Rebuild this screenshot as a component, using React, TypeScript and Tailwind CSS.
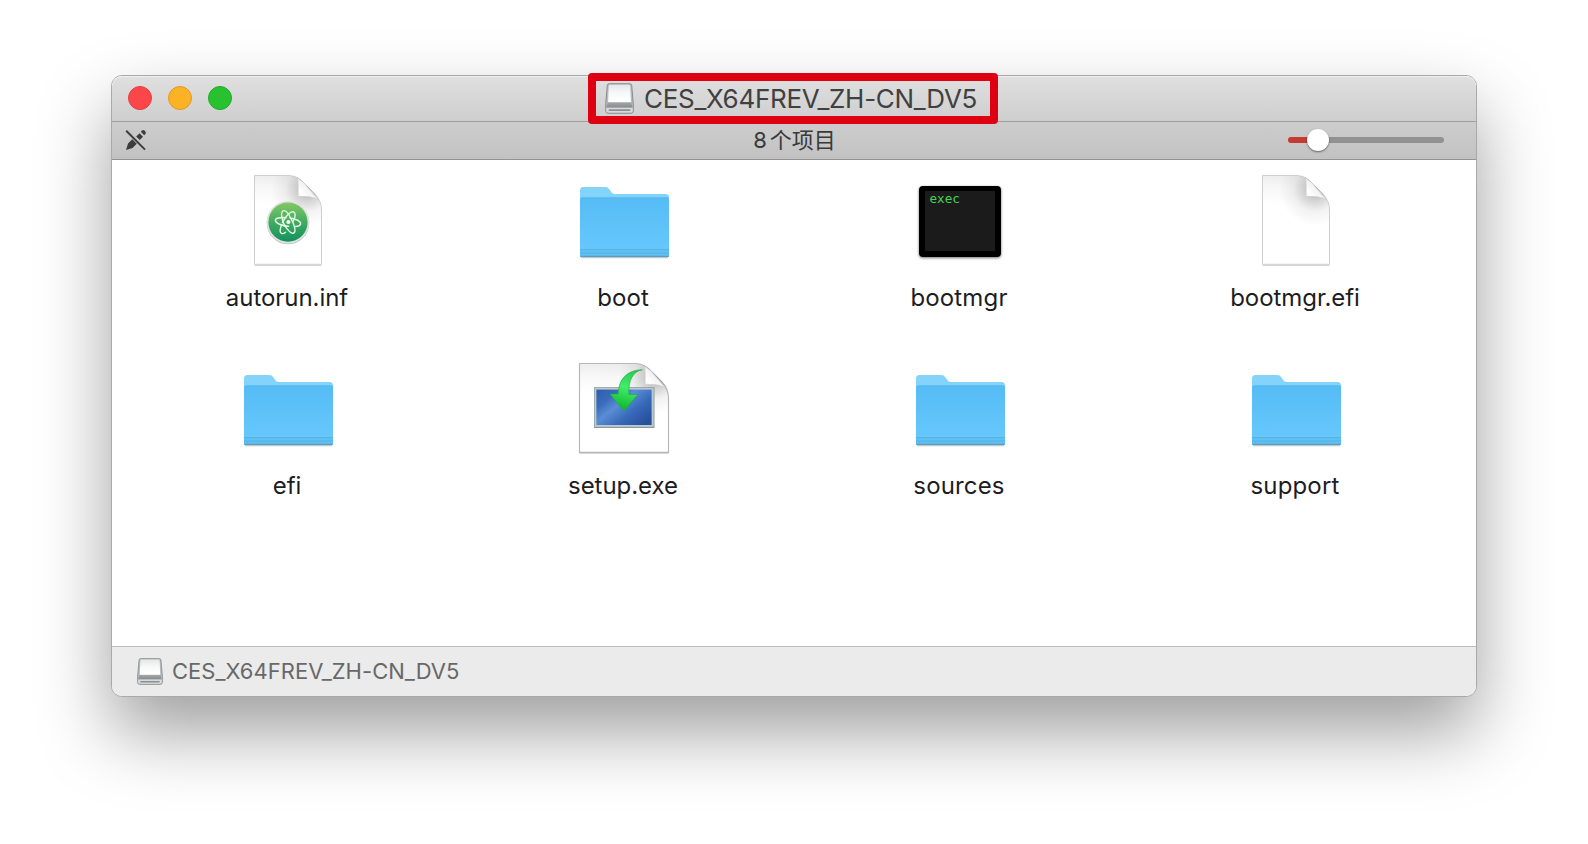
import React from "react";

function Drive({ className, dark }: { className: string; dark?: boolean }) {
  const id = dark ? "drive-a" : "drive-b";
  return (
    <svg viewBox="0 0 28 30" preserveAspectRatio="none" className={className}>
      <defs>
        <linearGradient id={id} x1="0" y1="0" x2="0" y2="1">
          <stop offset="0" stopColor="#e4e7e9" />
          <stop offset=".5" stopColor="#f8f9f9" />
          <stop offset="1" stopColor="#ffffff" />
        </linearGradient>
        <linearGradient id={`${id}-slope`} x1="0" y1="0" x2="0" y2="1">
          <stop offset="0" stopColor="#a4a7a9" />
          <stop offset="1" stopColor="#858a8d" />
        </linearGradient>
      </defs>
      <path d="M3.9.7H24.1Q25.7.7 25.8 2.5L27.3 20V27Q27.3 29.3 25 29.3H3Q.7 29.3.7 27V20L2.2 2.5Q2.3.7 3.9.7Z" fill="#b9bcbe" stroke="#84888b" strokeWidth=".9" />
      <path d="M4.6 1.7H23.4Q24.3 1.7 24.4 2.8L25 18.6H3L3.6 2.8Q3.7 1.7 4.6 1.7Z" fill={`url(#${id})`} />
      <path d="M2.6 18.8H25.4L26.6 23.9H1.4Z" fill={`url(#${id}-slope)`} />
      <path d="M1.3 24H26.7V26.8Q26.7 28.6 24.8 28.6H3.2Q1.3 28.6 1.3 26.8Z" fill="#d9dbdc" />
      <rect x="3.4" y="25.5" width="21.2" height="1.6" rx=".8" fill="#8a8f92" />
    </svg>
  );
}

function Page({ wide, id, children }: { wide?: boolean; id: string; children?: React.ReactNode }) {
  const w = wide ? 90 : 68;
  return (
    <svg viewBox={`-2 -1 ${w + 4} 94`} width={w + 4} height={94} className="block">
      <defs>
        <linearGradient id={`${id}-bg`} x1="0.3" y1="0" x2="0.24" y2="1">
          <stop offset="0" stopColor="#ececec" />
          <stop offset=".14" stopColor="#f7f7f7" />
          <stop offset=".34" stopColor="#ffffff" />
        </linearGradient>
        <radialGradient id={`${id}-sh`} gradientUnits="userSpaceOnUse" cx={w - 15} cy="15" r="36">
          <stop offset="0" stopColor="#000" stopOpacity=".28" />
          <stop offset=".3" stopColor="#000" stopOpacity=".16" />
          <stop offset=".6" stopColor="#000" stopOpacity=".05" />
          <stop offset="1" stopColor="#000" stopOpacity="0" />
        </radialGradient>
        <linearGradient id={`${id}-fold`} x1="0" y1="1" x2=".55" y2=".45">
          <stop offset="0" stopColor="#e6e6e6" />
          <stop offset=".4" stopColor="#ffffff" />
          <stop offset="1" stopColor="#f0f0f0" />
        </linearGradient>
      </defs>
      <g transform={`translate(${w - 67} 0)`}>
        <path d={`M${67 - w + 0.5} 90.3H66.5`} stroke="#000" strokeOpacity=".16" strokeWidth="1.6" />
        <path d={`M${67 - w + 0.5} .5H34Q42 1 47 6L60 19Q66.5 26 66.5 35V89.3H${67 - w + 0.5}Z`} fill={`url(#${id}-bg)`} stroke={wide ? "#b8b8b8" : "#cbcbcb"} strokeWidth={wide ? 1.2 : 0.9} />
      </g>
      <path d={`M${w - 33} 1Q${w - 25} 1 ${w - 20} 6L${w - 7} 19Q${w - 1} 26 ${w - 1} 35V52H${w - 60}V1Z`} fill={`url(#${id}-sh)`} />
      <path d={`M${w - 24} 3.5Q${w - 23.5} 14 ${w - 24} 21.6Q${w - 12} 20.5 ${w - 4} 24.5L${w - 18} 8Z`} fill={`url(#${id}-fold)`} stroke="#cdcdcd" strokeWidth=".6" />
      {children}
    </svg>
  );
}

function AtomDoc() {
  return (
    <Page id="atom">
      <defs>
        <linearGradient id="atom-green" x1="0" y1="0" x2="0" y2="1">
          <stop offset="0" stopColor="#84c864" />
          <stop offset=".5" stopColor="#41ab62" />
          <stop offset="1" stopColor="#11915d" />
        </linearGradient>
      </defs>
      <g transform="translate(0.6 0)">
        <circle cx="33.4" cy="48" r="21.3" fill="#b9c0bc" />
        <circle cx="33.4" cy="47.2" r="21.3" fill="#dfe3e0" />
        <circle cx="33.4" cy="47.2" r="19.6" fill="url(#atom-green)" />
        <g fill="none" stroke="#e4f8e2" strokeWidth="1.4" strokeLinecap="round">
          <path d="M31.5 42.7C25 42 20.5 43.2 20.8 45.6C21.2 48.2 27 50.8 34 51.3" />
          <path d="M35.5 43C42 44 46.3 46.6 46 48.9C45.8 50.6 43.8 51.4 40.8 51.5" />
          <path d="M30.5 51.5C26.8 44.5 25.9 37.2 28.4 35.9C30.2 35 32.6 37 34.8 40.4" />
          <path d="M35.2 41.6C40 49 41.7 56.6 39.2 58C37 59.1 33 55.6 30.1 50.1" />
          <path d="M27.8 47.6C31 40.5 36.4 35.7 39 36.9C41 37.9 40.7 41.9 38.6 46.4" />
          <path d="M26.9 50C25.2 54.3 25.2 57.5 26.9 58.4C28 58.9 29.4 58.4 30.9 57.2" />
        </g>
        <circle cx="33.8" cy="47" r="2.1" fill="#f4fff2" />
      </g>
    </Page>
  );
}

function SetupDoc() {
  return (
    <Page id="setup" wide>
      <defs>
        <linearGradient id="screen" x1="0" y1="0" x2="1" y2=".8">
          <stop offset="0" stopColor="#2e5cac" />
          <stop offset=".25" stopColor="#3a6bbb" />
          <stop offset=".45" stopColor="#5a8dd4" />
          <stop offset=".7" stopColor="#386abb" />
          <stop offset="1" stopColor="#284f9c" />
        </linearGradient>
        <linearGradient id="arrow" x1=".7" y1="0" x2=".5" y2="1">
          <stop offset="0" stopColor="#2ac951" />
          <stop offset=".45" stopColor="#43ec69" />
          <stop offset="1" stopColor="#0cb52d" />
        </linearGradient>
      </defs>
      <rect x="15" y="24.2" width="60.5" height="40.8" fill="#8e989b" />
      <rect x="15.6" y="25" width="59" height="38.8" fill="#b9cbcf" />
      <rect x="17.4" y="26.6" width="55.2" height="35.4" fill="url(#screen)" />
      <path d="M63.5 6.7C54 8.5 49.3 17 49.8 31.5H58.7L45 48L31 31H39.2C39.5 16 48 7 63.5 6.7Z" fill="url(#arrow)" stroke="#20a942" strokeWidth=".6" />
    </Page>
  );
}

function Folder() {
  return (
    <svg viewBox="0 0 93 75" width={93} height={75} className="block translate-y-[2px]">
      <defs>
        <linearGradient id="folder-front" x1="0" y1="0" x2="0" y2="1">
          <stop offset="0" stopColor="#56bcf5" />
          <stop offset="1" stopColor="#68c9fd" />
        </linearGradient>
      </defs>
      <path d="M3 71.6H90" stroke="#000" strokeOpacity=".22" strokeWidth="1.5" />
      <path d="M2 12V4.5Q2 1 5.5 1H27Q30 1 31.5 3.4L34 7Q35 8 37 8H87.5Q91 8 91 11.5V14H2Z" fill="#83d3fb" />
      <path d="M2 13Q2 11.5 4 11.5H89Q91 11.5 91 13V69.5Q91 71 89.5 71H3.5Q2 71 2 69.5Z" fill="url(#folder-front)" />
      <path d="M3 12H90" stroke="#54b8ec" strokeWidth="1" />
      <rect x="2" y="63" width="89" height="8" rx="1" fill="#61c0f2" />
      <path d="M2 63.7H91M2 67.2H91" stroke="#53b2e4" strokeWidth="1" />
      <path d="M2.5 70.4H90.5" stroke="#4f9fc8" strokeWidth="1.1" />
    </svg>
  );
}

function Exec() {
  return (
    <div className="mt-[1px] mr-[1px] h-[71px] w-[82px] rounded-[4px] border-[6px] border-t-[5px] border-black bg-[#1b1b1b] shadow-[0_1px_3px_rgba(0,0,0,0.55)]">
      <div className="pl-[5px] font-['DejaVu_Sans_Mono',monospace] text-[12.6px] leading-[16px] text-[#42d551]">exec</div>
    </div>
  );
}

const items: { name: string; icon: React.ReactNode; label: string }[] = [
  { name: "autorun.inf", icon: <AtomDoc />, label: "tracking-[-0.05px]" },
  { name: "boot", icon: <Folder />, label: "tracking-[0.1px]" },
  { name: "bootmgr", icon: <Exec />, label: "tracking-[0.15px]" },
  { name: "bootmgr.efi", icon: <Page id="plain" />, label: "tracking-[-0.05px]" },
  { name: "efi", icon: <Folder />, label: "tracking-[-0.1px]" },
  { name: "setup.exe", icon: <SetupDoc />, label: "tracking-[-0.05px]" },
  { name: "sources", icon: <Folder />, label: "tracking-[0.15px]" },
  { name: "support", icon: <Folder />, label: "tracking-[0.15px]" },
];

export default function App() {
  return (
    <div className="h-[844px] w-[1588px] overflow-hidden bg-white pt-[75px] pl-[111px] font-[Inter,'Noto_Sans_CJK_SC',sans-serif]">
      <div className="flex h-[622px] w-[1366px] flex-col rounded-[11px] border border-[#a9a9a9] bg-white shadow-[0_35px_72px_rgba(0,0,0,0.38)]">
        <header className="flex h-[46px] shrink-0 items-center rounded-t-[10px] border-b border-[#a0a0a0] bg-linear-to-b from-[#e0e0e0] to-[#cecece] shadow-[inset_0_1px_0_#efefef]">
          <div className="flex w-[476px] gap-4 pb-[1px] pl-4">
            <span className="size-6 rounded-full border border-[#e33e41] bg-[#fc4649]" />
            <span className="size-6 rounded-full border border-[#e09a21] bg-[#fdb225]" />
            <span className="size-6 rounded-full border border-[#20a92a] bg-[#28c231]" />
          </div>
          <div className="relative z-10 -my-1 flex h-[51px] w-[410px] shrink-0 items-center rounded-[4px] border-8 border-[#df0011] pl-[9px]">
            <Drive dark className="h-[31px] w-[29px]" />
            <span className="ml-[10px] text-[26px] leading-[34px] tracking-[-0.28px] whitespace-nowrap text-[#404040]">CES_X64FREV_ZH-CN_DV5</span>
          </div>
        </header>
        <div className="flex h-[38px] shrink-0 items-center border-b border-[#929292] bg-linear-to-b from-[#cdcdcd] to-[#c2c2c2] pr-[32px] pb-[1px] pl-[13px]">
          <div className="flex-1">
            <svg viewBox="0 0 22 22" className="size-[22px]">
              <path d="M1 21L3 14.5L7.5 10L12 14.5L7.5 19Z" fill="#3d3d3d" />
              <path d="M11.2 7.5L14.5 4.2L18 7.7L14.7 11Z" fill="#3d3d3d" />
              <path d="M15.8 2.8L17.2 1.4Q18.6.6 20 2Q21.4 3.4 20.6 4.8L19.2 6.2Z" fill="#3d3d3d" />
              <path d="M1.5 1.5L20.5 20.5" stroke="#c8c8c8" strokeWidth="4" />
              <path d="M1.2 1.8L20 20.6" stroke="#3d3d3d" strokeWidth="2" />
            </svg>
          </div>
          <div className="mr-[-20px] flex items-center gap-[3px] text-[22px] leading-[30px] text-[#3a3a3a]">
            <span>8</span>
            <span>个项目</span>
          </div>
          <div className="flex flex-1 justify-end">
            <div className="relative flex h-6 w-[156px] items-center">
              <div className="h-[6px] w-[30px] rounded-l-full bg-[#c33b32]" />
              <div className="h-[6px] flex-1 rounded-r-full bg-[#929292]" />
              <div className="absolute top-[1px] left-[19px] size-[22px] rounded-full bg-white shadow-[0_1px_2px_rgba(0,0,0,0.5)]" />
            </div>
          </div>
        </div>
        <main className="grid flex-1 grid-cols-[repeat(4,336px)] grid-rows-[188px_188px] content-start bg-white pt-[14px] pl-[8px]">
          {items.map((item) => (
            <div key={item.name} className="flex flex-col items-center">
              <div className="flex h-[94px] items-center justify-center">{item.icon}</div>
              <div className={`mt-[14px] mr-[2px] text-[24px] leading-[32px] text-[#1d1d1f] ${item.label}`}>{item.name}</div>
            </div>
          ))}
        </main>
        <footer className="flex h-[50px] shrink-0 items-center rounded-b-[10px] border-t border-[#bcbcbc] bg-[#ebebeb] pb-[1px] pl-[25px]">
          <Drive className="h-[27px] w-[26px]" />
          <span className="ml-[9px] text-[22px] leading-[30px] tracking-[0.03px] text-[#686868]">CES_X64FREV_ZH-CN_DV5</span>
        </footer>
      </div>
    </div>
  );
}
